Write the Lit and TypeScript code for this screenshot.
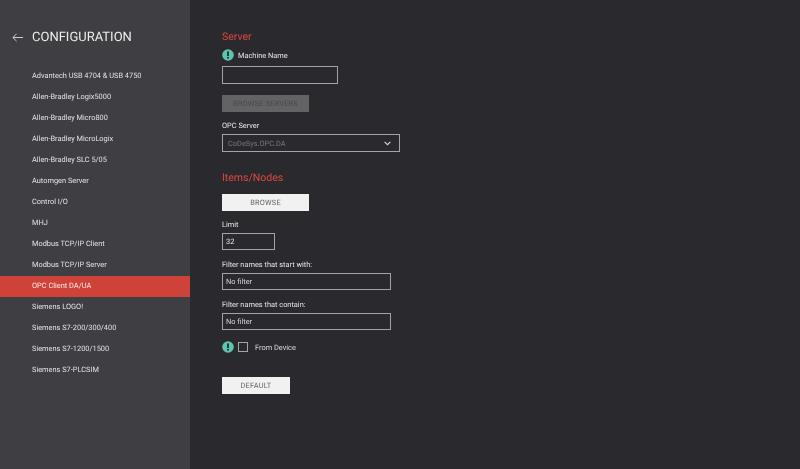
import { LitElement, css, html } from "lit";
import { customElement } from "lit/decorators.js";

const ITEMS = [
  "Advantech USB 4704 & USB 4750",
  "Allen-Bradley Logix5000",
  "Allen-Bradley Micro800",
  "Allen-Bradley MicroLogix",
  "Allen-Bradley SLC 5/05",
  "Automgen Server",
  "Control I/O",
  "MHJ",
  "Modbus TCP/IP Client",
  "Modbus TCP/IP Server",
  "OPC Client DA/UA",
  "Siemens LOGO!",
  "Siemens S7-200/300/400",
  "Siemens S7-1200/1500",
  "Siemens S7-PLCSIM",
];

const infoIcon = html`<svg class="info" width="12" height="12" viewBox="0 0 12 12">
  <circle cx="6" cy="6" r="5.8" fill="#5cc4b0"></circle>
  <rect x="5.1" y="2.4" width="1.8" height="4.6" fill="#2a292e"></rect>
  <rect x="5.1" y="7.9" width="1.8" height="1.7" fill="#2a292e"></rect>
</svg>`;

@customElement("app-root")
export class AppRoot extends LitElement {
  render() {
    return html`
      <aside class="side">
        <header class="head">
          <svg class="back" width="11" height="9" viewBox="0 0 11 9" fill="none" stroke="#dcdcdc" stroke-width="0.9">
            <path d="M11 4.5H1M4.6 .8L.9 4.5l3.7 3.7"></path>
          </svg>
          <h1>CONFIGURATION</h1>
        </header>
        <nav class="list">
          ${ITEMS.map(
            (name) =>
              html`<div class="item ${name === "OPC Client DA/UA" ? "active" : ""}">${name}</div>`
          )}
        </nav>
      </aside>
      <main class="main">
        <h2 class="title first">Server</h2>
        <div class="label-row">${infoIcon}<span>Machine Name</span></div>
        <div class="field machine"></div>
        <div class="btn disabled">BROWSE SERVERS</div>
        <div class="label opc">OPC Server</div>
        <div class="field select">
          <span>CoDeSys.OPC.DA</span>
          <svg width="7" height="5" viewBox="0 0 7 5" fill="none" stroke="#d8d8d8" stroke-width="1.1">
            <path d="M.6 .8l2.9 2.9L6.4 .8"></path>
          </svg>
        </div>
        <h2 class="title second">Items/Nodes</h2>
        <div class="btn light browse">BROWSE</div>
        <div class="label limit-label">Limit</div>
        <div class="field limit">32</div>
        <div class="label filter-label">Filter names that start with:</div>
        <div class="field filter">No filter</div>
        <div class="label filter-label">Filter names that contain:</div>
        <div class="field filter">No filter</div>
        <div class="device">
          ${infoIcon}
          <span class="check"></span>
          <span>From Device</span>
        </div>
        <div class="btn light default">DEFAULT</div>
      </main>
    `;
  }

  static styles = css`
    :host {
      display: flex;
      width: 800px;
      height: 469px;
      overflow: hidden;
      background: #2a292e;
      color: #e6e6e6;
      font-family: Roboto, "Liberation Sans", sans-serif;
      font-size: 7.4px;
      text-rendering: geometricPrecision;
      /* the reference is soft and has no colour fringes on its text */
      filter: blur(0.3px);
    }
    .side {
      width: 190px;
      flex: none;
      background: #3f3e43;
    }
    .head {
      display: flex;
      align-items: center;
      height: 22px;
      margin-top: 26px;
      padding-left: 12px;
    }
    .back {
      margin-right: 9px;
    }
    h1 {
      margin: 0;
      font-size: 13px;
      font-weight: 400;
      color: #ececec;
    }
    .list {
      margin-top: 18px;
    }
    .item {
      height: 21px;
      line-height: 20px;
      padding-left: 32px;
      font-size: 7.4px;
      color: #e2e2e2;
    }
    .item.active {
      background: #cf4239;
      color: #fbe9e7;
    }
    .main {
      flex: 1;
      padding: 30px 0 0 32px;
    }
    .title {
      margin: 0;
      font-weight: 400;
      font-size: 10.5px;
      line-height: 14px;
      color: #e0473f;
    }
    .label-row {
      display: flex;
      align-items: center;
      gap: 4px;
      height: 12px;
      margin-top: 5px;
    }
    .info {
      flex: none;
    }
    .label {
      line-height: 10px;
    }
    .field {
      box-sizing: border-box;
      display: flex;
      align-items: center;
      padding-left: 3px;
      border: 1px solid #a4a4a4;
      color: #d4d4d4;
    }
    .machine {
      width: 116px;
      height: 18px;
      margin-top: 5px;
    }
    .btn {
      display: flex;
      align-items: center;
      justify-content: center;
      height: 17px;
      letter-spacing: 0.2px;
    }
    .disabled {
      width: 87px;
      margin-top: 11px;
      background: #636264;
      color: #48484d;
    }
    .opc {
      margin-top: 9px;
    }
    .select {
      justify-content: space-between;
      width: 178px;
      height: 18px;
      margin-top: 3px;
      padding: 0 8px 0 5px;
      color: #77777a;
    }
    .second {
      margin-top: 19px;
    }
    .light {
      background: #f1f1f1;
      color: #66666a;
    }
    .browse {
      width: 87px;
      margin-top: 9px;
    }
    .limit-label {
      margin-top: 9px;
    }
    .limit {
      width: 53px;
      height: 17px;
      margin-top: 3px;
      color: #e6e6e6;
    }
    .filter-label {
      margin-top: 10px;
    }
    .filter {
      width: 169px;
      height: 17px;
      margin-top: 3px;
    }
    .device {
      display: flex;
      align-items: center;
      height: 12px;
      margin-top: 11px;
      color: #dcdcdc;
    }
    .check {
      box-sizing: border-box;
      width: 10px;
      height: 10px;
      margin: 0 7px 0 4px;
      border: 1px solid #a4a4a4;
    }
    .default {
      width: 68px;
      margin-top: 24px;
    }
  `;
}
